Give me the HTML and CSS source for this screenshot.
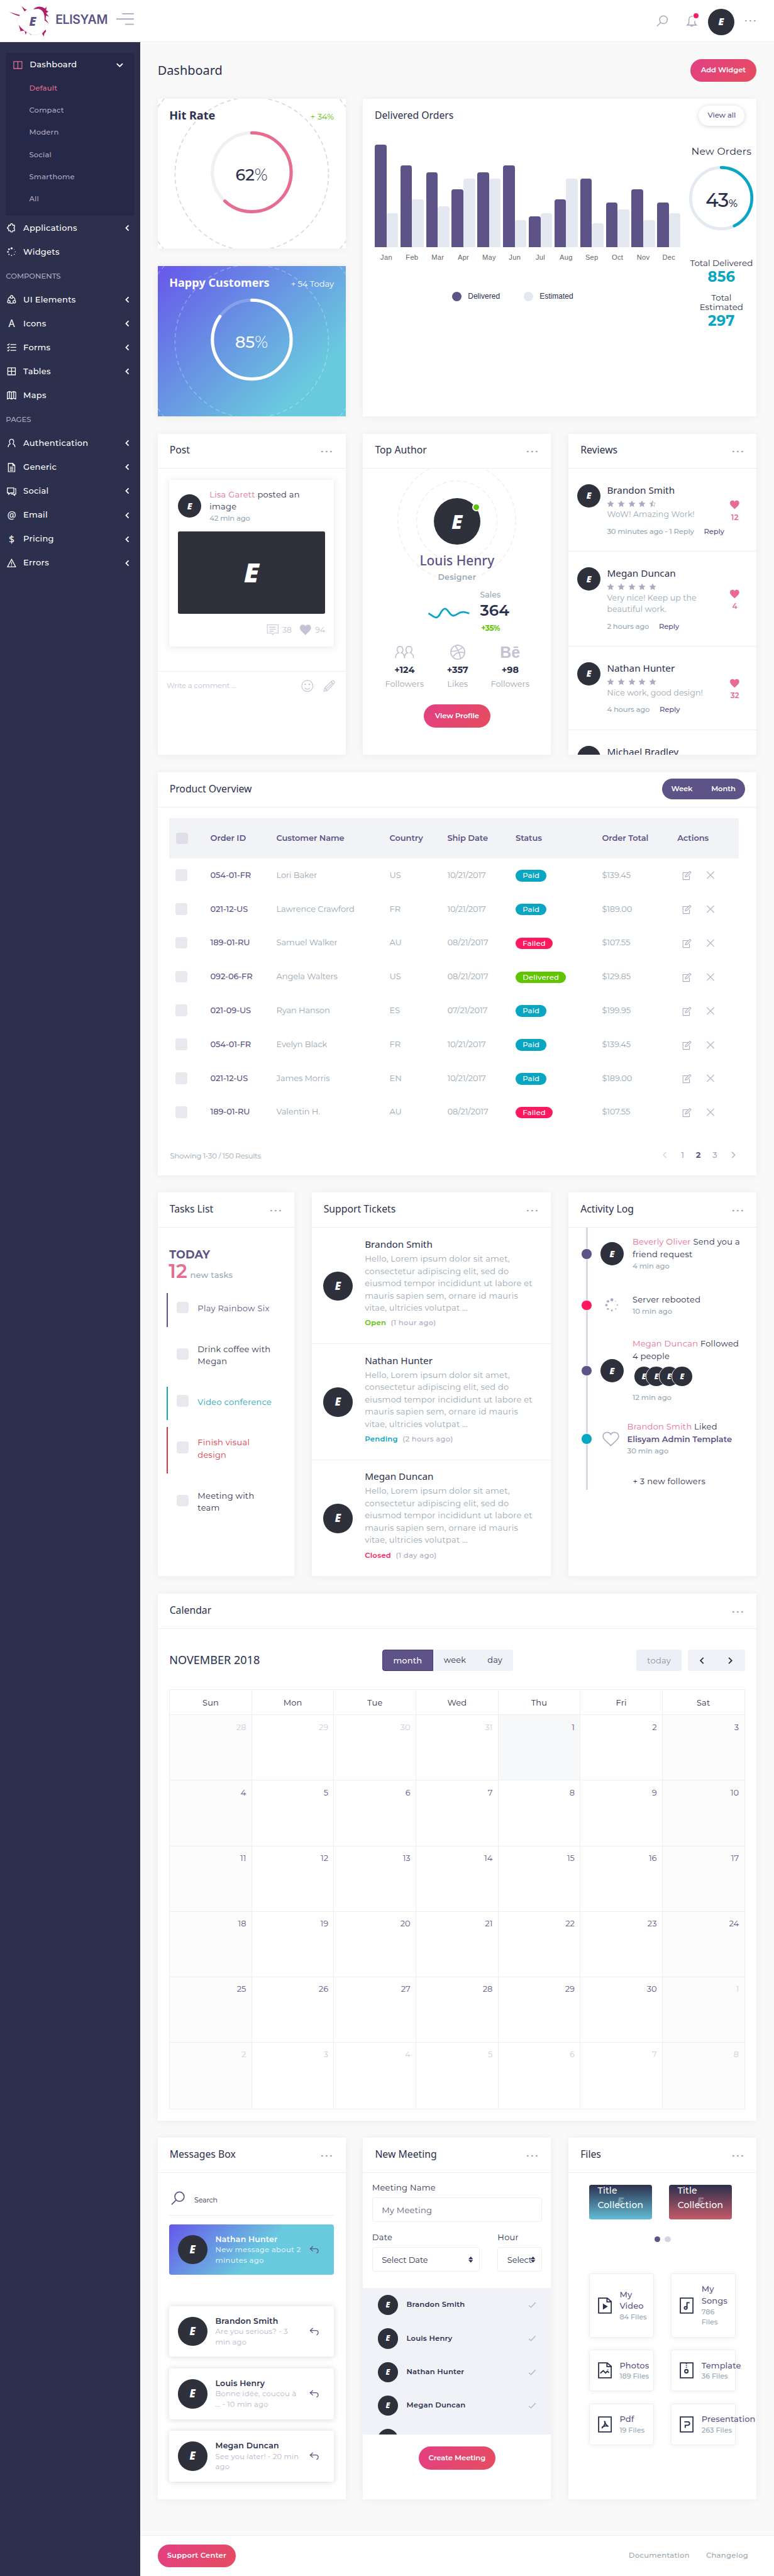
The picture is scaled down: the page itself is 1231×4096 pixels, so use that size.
FILE: index.html
```html
<!DOCTYPE html>
<html lang="en">
<head>
<meta charset="utf-8">
<title>Elisyam - Dashboard</title>
<link rel="stylesheet" href="styles.css">
</head>
<body>
<div class="page">
<svg class="sprite" aria-hidden="true">
  <symbol id="i-columns" viewBox="0 0 16 16"><path d="M1 2h14v12H1zM8 2v12"/></symbol>
  <symbol id="i-puzzle" viewBox="0 0 16 16"><path d="M3 3.500h3Q5.800.8 8 .8t2 2.700h3v3q-1 .2-1 1.300t1 1.600v3.300h-3Q9.800 15.200 8 15.200t-2-2.500H3v-3Q.8 9.600.8 7.800T3 6.300z"/></symbol>
  <symbol id="i-loader" viewBox="0 0 24 24"><g class="fill"><circle cx="12" cy="3" r="2.600"/><circle cx="5.300" cy="5.600" r="2.200"/><circle cx="2.600" cy="12" r="2"/><circle cx="5.300" cy="18.600" r="1.700"/><circle cx="12" cy="21.300" r="1.500"/><circle cx="18.700" cy="18.600" r="1.200"/><circle cx="21.500" cy="12" r="1.100"/><circle cx="18.700" cy="5.600" r=".8"/></g></symbol>
  <symbol id="i-share" viewBox="0 0 16 16"><path d="M5.500 3.500C3 4.500 2 6.500 2.200 9M10.500 3.500c2.500 1 3.500 3 3.300 5.500M5.500 13.800q2.500.8 5 0"/><circle cx="8" cy="3.400" r="2.300"/><circle cx="3.300" cy="11.600" r="2.200"/><circle cx="12.700" cy="11.600" r="2.200"/></symbol>
  <symbol id="i-forms" viewBox="0 0 16 16"><path d="M6 3h10M6 8h10M6 13h10M.8 2.800l1.300 1.300L4.300 1.500M.8 7.800l1.300 1.300 2.200-2.600M.8 12.800l1.300 1.300 2.200-2.600"/></symbol>
  <symbol id="i-grid" viewBox="0 0 16 16"><path d="M1.500 2h13v12h-13zM8 2v12M1.500 8h13"/></symbol>
  <symbol id="i-map" viewBox="0 0 16 16"><path d="M.8 3l3.600-1.500L8 3l3.600-1.500L15.200 3v11.500L11.600 13 8 14.500 4.400 13 .8 14.500zM4.400 1.500V13M8 3v11.500M11.600 1.500V13"/></symbol>
  <symbol id="i-user" viewBox="0 0 16 16"><path d="M2.200 15c0-3.500 2-5 3.800-5.400M13.800 15c0-3.500-2-5-3.800-5.400M2.200 14V15M6 9.600C3 7 4 1.500 8 1.500S13 7 10 9.600"/></symbol>
  <symbol id="i-doc" viewBox="0 0 16 16"><path d="M2.500.8H10l3.500 3.500v11h-11zM10 .8v3.500h3.500M5 7.500h6M5 10h6M5 12.500h6"/></symbol>
  <symbol id="i-chat" viewBox="0 0 16 16"><path d="M.8 2h11v8.500H6L3 13v-2.500H.8zM13.500 3.500h1.800v9h-2V15l-3-2.500H7"/></symbol>
  <symbol id="i-warn" viewBox="0 0 16 16"><path d="M8 1.500l7 13H1zM8 6v4.500M8 11.800v1.500"/></symbol>
  <symbol id="i-chev" viewBox="0 0 16 16"><path d="M10.500 3L5.500 8l5 5"/></symbol>
  <symbol id="i-search" viewBox="0 0 24 24"><circle cx="14.500" cy="9.500" r="8"/><path d="M8.500 15.500L1 23"/></symbol>
  <symbol id="i-bell" viewBox="0 0 24 24"><path d="M14 3C8 1.500 6 6 6 10v7l-3.500 3.500h19L18 17v-5M9.500 21c.5 3 4.500 3 5 0"/></symbol>
  <symbol id="i-dots" viewBox="0 0 20 4"><g class="fill"><rect x="0" y="1" width="3" height="2.500"/><rect x="8" y="1" width="3" height="2.500"/><rect x="16" y="1" width="3" height="2.500"/></g></symbol>
  <symbol id="i-comment" viewBox="0 0 24 24"><path d="M1 2h22v17h-8.500L12 22l-2.500-3H1zM5 7h13M5 11h14M5 15h9"/></symbol>
  <symbol id="i-heart" viewBox="0 0 24 22"><path class="fill" d="M12 21.500C7 16.500 1 12 1 7c0-6.500 8.500-8 11-3 2.500-5 11-3.500 11 3 0 5-6 9.500-11 14.500z"/></symbol>
  <symbol id="i-heart-o" viewBox="0 0 30 26"><path d="M15 25C10 19 1.200 14.500 1.200 8.500c0-8 10.500-9.500 13.800-3.500C18.300-1 28.800.5 28.800 8.500c0 6-8.800 10.500-13.800 16.500z"/></symbol>
  <symbol id="i-smile" viewBox="0 0 24 24"><circle cx="12" cy="12" r="11"/><path d="M7 15.500c2 4 8 4 10 0"/><g class="fill"><circle cx="8" cy="9" r="1.500"/><circle cx="16" cy="9" r="1.500"/></g></symbol>
  <symbol id="i-pencil" viewBox="0 0 24 24"><path d="M1.500 22.500L3 16 17.500 1.800q1.500-1.200 3.500.8t1 3.600L8 21zM16 4l4.500 4.500M3 16l5 5M18.500 6L6 18"/></symbol>
  <symbol id="i-star" viewBox="0 0 16 16"><path class="fill" d="M8 .8l2.200 4.900 5.200.5-3.900 3.500 1.200 5.300L8 12.300 3.300 15l1.200-5.300L.6 6.200l5.200-.5z"/></symbol>
  <symbol id="i-half" viewBox="0 0 16 16"><path class="fill" d="M8 .8v11.500L3.300 15l1.200-5.300L.6 6.200l5.200-.5z"/><path d="M8 2l1.800 4.200 4.200.4-3.200 2.800 1 4.200L8 11.500"/></symbol>
  <symbol id="i-users" viewBox="0 0 32 22"><path d="M1 21c0-5 2-8 5.500-9C2.500 9 3 1.500 8.500 1.500S15 9 11 12c3 .8 5 3.500 5 9M16 21c0-5.500 2-8.200 5-9-4-3-3.500-10.500 2.500-10.500S29.500 9 25.500 12c3.500 1 5.500 4 5.500 9"/></symbol>
  <symbol id="i-dribbble" viewBox="0 0 26 26"><circle cx="13" cy="13" r="12"/><path d="M8.500 2c5 6 8 13 9.500 22M1 11.500c8 .5 15-1 20.500-7.500M4.500 21.500C9 13.500 16 11.500 25 14"/></symbol>
  <symbol id="i-edit" viewBox="0 0 18 18"><path d="M11 3H1.500v13.500h12.500V9M6 11.500l1-3.500L14.500.8l2.500 1.700L10 10z"/></symbol>
  <symbol id="i-x" viewBox="0 0 16 16"><path d="M1 1l14 14M15 1L1 15"/></symbol>
  <symbol id="i-check" viewBox="0 0 16 16"><path d="M1 9l4.500 4L15 3"/></symbol>
  <symbol id="i-reply" viewBox="0 0 18 16"><path d="M6.500 1.500L1.500 6l5 4.500M1.500 6H12c5 0 5.500 6.500 1 8"/></symbol>
  <symbol id="i-sort" viewBox="0 0 8 11"><path class="fill" d="M4 0l4 4.500H0zM0 6h8l-4 4.500z"/></symbol>
  <symbol id="f-fold" viewBox="0 0 24 28"><path d="M1.200 1.200H16l6.800 6V26.800H1.200zM15.500 1.200v6.500h7"/></symbol>
  <symbol id="f-sq" viewBox="0 0 24 28"><path d="M1.200 1.200h21.600v25.600H1.200z"/></symbol>
</svg>

<header class="topbar">
  <svg class="logo" viewBox="0 0 76 56">
    <path class="splat" d="M1 12q10 6 18 8l1-2Q8 15 1 12M23 3l5 9 4-3-3-1zM43 8q10-8 20-1l3-3-1 6 4 2-4 3 5 6-5-2-1 6 6 8-9-7Q63 11 43 8M18 35l3 10-2 1 9-1 2 7 2-5 8 6-2-4Q26 46 21 35zM58 50l6-7 1 3-3 4-1 5z"/>
    <path class="blob" d="M17 24Q30 8 52 8q11 2 10 20 3 17-5 21-12 7-22 0-15-8-20-20-1-3 2-5z"/>
    <text class="logo-e" x="36" y="37">E</text>
  </svg>
  <span class="brand">ELISYAM</span>
  <svg class="burger" viewBox="0 0 30 20"><path d="M10 1h20M0 10h30M15 19h15"/></svg>
  <div class="top-actions">
    <svg class="ic t-search"><use href="#i-search"/></svg>
    <span class="bell"><svg class="ic t-bell"><use href="#i-bell"/></svg><i></i></span>
    <span class="av av40">E</span>
    <svg class="ic dots"><use href="#i-dots"/></svg>
  </div>
</header>

<div class="shell">
<nav class="side">
  <div class="open">
    <div class="open-head"><svg class="ic"><use href="#i-columns"/></svg><span>Dashboard</span><svg class="ic chev down"><use href="#i-chev"/></svg></div>
    <a class="sub on">Default</a><a class="sub">Compact</a><a class="sub">Modern</a><a class="sub">Social</a><a class="sub">Smarthome</a><a class="sub">All</a>
  </div>
  <a class="item"><svg class="ic"><use href="#i-puzzle"/></svg><span>Applications</span><svg class="ic chev"><use href="#i-chev"/></svg></a>
  <a class="item"><svg class="ic"><use href="#i-loader"/></svg><span>Widgets</span></a>
  <div class="group">COMPONENTS</div>
  <a class="item"><svg class="ic"><use href="#i-share"/></svg><span>UI Elements</span><svg class="ic chev"><use href="#i-chev"/></svg></a>
  <a class="item"><b class="glyph">A</b><span>Icons</span><svg class="ic chev"><use href="#i-chev"/></svg></a>
  <a class="item"><svg class="ic"><use href="#i-forms"/></svg><span>Forms</span><svg class="ic chev"><use href="#i-chev"/></svg></a>
  <a class="item"><svg class="ic"><use href="#i-grid"/></svg><span>Tables</span><svg class="ic chev"><use href="#i-chev"/></svg></a>
  <a class="item"><svg class="ic"><use href="#i-map"/></svg><span>Maps</span></a>
  <div class="group">PAGES</div>
  <a class="item"><svg class="ic"><use href="#i-user"/></svg><span>Authentication</span><svg class="ic chev"><use href="#i-chev"/></svg></a>
  <a class="item"><svg class="ic"><use href="#i-doc"/></svg><span>Generic</span><svg class="ic chev"><use href="#i-chev"/></svg></a>
  <a class="item"><svg class="ic"><use href="#i-chat"/></svg><span>Social</span><svg class="ic chev"><use href="#i-chev"/></svg></a>
  <a class="item"><b class="glyph">@</b><span>Email</span><svg class="ic chev"><use href="#i-chev"/></svg></a>
  <a class="item"><b class="glyph">$</b><span>Pricing</span><svg class="ic chev"><use href="#i-chev"/></svg></a>
  <a class="item"><svg class="ic"><use href="#i-warn"/></svg><span>Errors</span><svg class="ic chev"><use href="#i-chev"/></svg></a>
</nav>

<div class="content">
<main class="main">
  <div class="page-head"><h1>Dashboard</h1><a class="btn">Add Widget</a></div>

  <div class="row r1">
    <div class="stack">
      <section class="card rate">
        <svg class="rings" viewBox="0 0 322 257"><g class="dash"><circle cx="161" cy="129" r="131.500"/><circle cx="161" cy="129" r="198"/></g><circle class="trk" cx="161" cy="126" r="67.500"/><circle class="val" cx="161" cy="126" r="67.500" pathLength="100" stroke-dasharray="62 100" transform="rotate(-90 161 126)"/></svg>
        <div class="rate-head"><h2>Hit Rate</h2><span class="green">+ 34%</span></div>
        <div class="pct">62<span>%</span></div>
      </section>
      <section class="card rate happy">
        <svg class="rings" viewBox="0 0 322 257"><g class="dash"><circle cx="161" cy="129" r="131.500"/><circle cx="161" cy="129" r="198"/></g><circle class="trk" cx="161" cy="126" r="67.500"/><circle class="val" cx="161" cy="126" r="67.500" pathLength="100" stroke-dasharray="85 100" transform="rotate(-90 161 126)"/></svg>
        <div class="rate-head"><h2>Happy Customers</h2><span>+ 54 Today</span></div>
        <div class="pct">85<span>%</span></div>
      </section>
    </div>
    <section class="card orders">
      <div class="orders-head"><h3>Delivered Orders</h3><a class="view-all">View all</a></div>
      <div class="orders-body">
        <div class="chart-col">
          <div class="chart">
            <div class="m"><i style="height:175px"></i><i style="height:58px"></i></div>
            <div class="m"><i style="height:140px"></i><i style="height:81px"></i></div>
            <div class="m"><i style="height:128px"></i><i style="height:70px"></i></div>
            <div class="m"><i style="height:99px"></i><i style="height:117px"></i></div>
            <div class="m"><i style="height:128px"></i><i style="height:117px"></i></div>
            <div class="m"><i style="height:140px"></i><i style="height:46px"></i></div>
            <div class="m"><i style="height:52px"></i><i style="height:58px"></i></div>
            <div class="m"><i style="height:81px"></i><i style="height:117px"></i></div>
            <div class="m"><i style="height:117px"></i><i style="height:40px"></i></div>
            <div class="m"><i style="height:76px"></i><i style="height:64px"></i></div>
            <div class="m"><i style="height:99px"></i><i style="height:46px"></i></div>
            <div class="m"><i style="height:76px"></i><i style="height:58px"></i></div>
          </div>
          <div class="months"><span>Jan</span><span>Feb</span><span>Mar</span><span>Apr</span><span>May</span><span>Jun</span><span>Jul</span><span>Aug</span><span>Sep</span><span>Oct</span><span>Nov</span><span>Dec</span></div>
          <div class="legend"><span><i class="d1"></i>Delivered</span><span><i class="d2"></i>Estimated</span></div>
        </div>
        <div class="orders-side">
          <div class="no">New Orders</div>
          <div class="gauge"><svg viewBox="0 0 110 110"><circle class="g1" cx="55" cy="55" r="52.500"/><circle class="g2" cx="55" cy="55" r="52.500" pathLength="100" stroke-dasharray="43 100" transform="rotate(-90 55 55)"/></svg><div class="g-num">43<small>%</small></div></div>
          <div class="tot">Total Delivered</div><div class="big">856</div>
          <div class="tot t2">Total<br>Estimated</div><div class="big">297</div>
        </div>
      </div>
    </section>
  </div>

  <div class="row r2">
    <section class="card">
      <div class="head"><h3>Post</h3><svg class="ic dots"><use href="#i-dots"/></svg></div>
      <div class="post">
        <div class="post-top"><span class="av av40">E</span><div><div class="pt"><em>Lisa Garett</em> posted an<br>image</div><div class="ago">42 min ago</div></div></div>
        <div class="photo"><span class="mark">E</span></div>
        <div class="post-meta"><svg class="ic"><use href="#i-comment"/></svg><span>38</span><svg class="ic"><use href="#i-heart"/></svg><span>94</span></div>
      </div>
      <div class="write"><span>Write a comment ...</span><svg class="ic"><use href="#i-smile"/></svg><svg class="ic"><use href="#i-pencil"/></svg></div>
    </section>
    <section class="card author">
      <div class="head"><h3>Top Author</h3><svg class="ic dots"><use href="#i-dots"/></svg></div>
      <div class="author-body">
        <svg class="orbit" viewBox="0 0 322 200"><circle cx="161" cy="90" r="69"/><circle cx="161" cy="90" r="101"/></svg>
        <span class="av av80">E<i class="online"></i></span>
        <div class="a-name">Louis Henry</div>
        <div class="a-role">Designer</div>
        <div class="sales"><svg viewBox="0 0 71 20"><path d="M1 10c6 3 10 8 14 7 6-1 8-15 14-15s8 12 15 12c5 0 9-6 14-6 5-1 8 1 13 2"/></svg><div><div class="s1">Sales</div><div class="s2">364</div><div class="s3">+35%</div></div></div>
        <div class="stats">
          <div><svg class="ic u"><use href="#i-users"/></svg><b>+124</b><span>Followers</span></div>
          <div><svg class="ic"><use href="#i-dribbble"/></svg><b>+357</b><span>Likes</span></div>
          <div><strong class="be">B&#275;</strong><b>+98</b><span>Followers</span></div>
        </div>
        <a class="btn">View Profile</a>
      </div>
    </section>
    <section class="card reviews">
      <div class="head"><h3>Reviews</h3><svg class="ic dots"><use href="#i-dots"/></svg></div>
      <div class="review"><span class="av av40">E</span><div class="rv"><h4>Brandon Smith</h4><div class="stars"><svg class="ic"><use href="#i-star"/></svg><svg class="ic"><use href="#i-star"/></svg><svg class="ic"><use href="#i-star"/></svg><svg class="ic"><use href="#i-star"/></svg><svg class="ic"><use href="#i-half"/></svg></div><p>WoW! Amazing Work!</p><div class="rm">30 minutes ago - 1 Reply<b>Reply</b></div></div><div class="like"><svg class="ic"><use href="#i-heart"/></svg>12</div></div>
      <div class="review"><span class="av av40">E</span><div class="rv"><h4>Megan Duncan</h4><div class="stars"><svg class="ic"><use href="#i-star"/></svg><svg class="ic"><use href="#i-star"/></svg><svg class="ic"><use href="#i-star"/></svg><svg class="ic"><use href="#i-star"/></svg><svg class="ic"><use href="#i-star"/></svg></div><p>Very nice! Keep up the<br>beautiful work.</p><div class="rm">2 hours ago<b>Reply</b></div></div><div class="like"><svg class="ic"><use href="#i-heart"/></svg>4</div></div>
      <div class="review"><span class="av av40">E</span><div class="rv"><h4>Nathan Hunter</h4><div class="stars"><svg class="ic"><use href="#i-star"/></svg><svg class="ic"><use href="#i-star"/></svg><svg class="ic"><use href="#i-star"/></svg><svg class="ic"><use href="#i-star"/></svg><svg class="ic"><use href="#i-star"/></svg></div><p>Nice work, good design!</p><div class="rm">4 hours ago<b>Reply</b></div></div><div class="like"><svg class="ic"><use href="#i-heart"/></svg>32</div></div>
      <div class="review"><span class="av av40">E</span><div class="rv"><h4>Michael Bradley</h4></div></div>
    </section>
  </div>

  <section class="card product">
    <div class="head"><h3>Product Overview</h3><div class="toggle"><span>Week</span><span>Month</span></div></div>
    <div class="table">
      <div class="tr th"><i class="cb"></i><span>Order ID</span><span>Customer Name</span><span>Country</span><span>Ship Date</span><span>Status</span><span>Order Total</span><span>Actions</span></div>
      <div class="tr"><i class="cb"></i><b>054-01-FR</b><span>Lori Baker</span><span>US</span><span>10/21/2017</span><span><u class="paid">Paid</u></span><span>$139.45</span><span class="act"><svg class="ic"><use href="#i-edit"/></svg><svg class="ic"><use href="#i-x"/></svg></span></div>
      <div class="tr"><i class="cb"></i><b>021-12-US</b><span>Lawrence Crawford</span><span>FR</span><span>10/21/2017</span><span><u class="paid">Paid</u></span><span>$189.00</span><span class="act"><svg class="ic"><use href="#i-edit"/></svg><svg class="ic"><use href="#i-x"/></svg></span></div>
      <div class="tr"><i class="cb"></i><b>189-01-RU</b><span>Samuel Walker</span><span>AU</span><span>08/21/2017</span><span><u class="failed">Failed</u></span><span>$107.55</span><span class="act"><svg class="ic"><use href="#i-edit"/></svg><svg class="ic"><use href="#i-x"/></svg></span></div>
      <div class="tr"><i class="cb"></i><b>092-06-FR</b><span>Angela Walters</span><span>US</span><span>08/21/2017</span><span><u class="deliv">Delivered</u></span><span>$129.85</span><span class="act"><svg class="ic"><use href="#i-edit"/></svg><svg class="ic"><use href="#i-x"/></svg></span></div>
      <div class="tr"><i class="cb"></i><b>021-09-US</b><span>Ryan Hanson</span><span>ES</span><span>07/21/2017</span><span><u class="paid">Paid</u></span><span>$199.95</span><span class="act"><svg class="ic"><use href="#i-edit"/></svg><svg class="ic"><use href="#i-x"/></svg></span></div>
      <div class="tr"><i class="cb"></i><b>054-01-FR</b><span>Evelyn Black</span><span>FR</span><span>10/21/2017</span><span><u class="paid">Paid</u></span><span>$139.45</span><span class="act"><svg class="ic"><use href="#i-edit"/></svg><svg class="ic"><use href="#i-x"/></svg></span></div>
      <div class="tr"><i class="cb"></i><b>021-12-US</b><span>James Morris</span><span>EN</span><span>10/21/2017</span><span><u class="paid">Paid</u></span><span>$189.00</span><span class="act"><svg class="ic"><use href="#i-edit"/></svg><svg class="ic"><use href="#i-x"/></svg></span></div>
      <div class="tr"><i class="cb"></i><b>189-01-RU</b><span>Valentin H.</span><span>AU</span><span>08/21/2017</span><span><u class="failed">Failed</u></span><span>$107.55</span><span class="act"><svg class="ic"><use href="#i-edit"/></svg><svg class="ic"><use href="#i-x"/></svg></span></div>
    </div>
    <div class="tfoot"><span class="showing">Showing 1-30 / 150 Results</span><div class="pager"><svg class="ic off"><use href="#i-chev"/></svg><span>1</span><b>2</b><span>3</span><svg class="ic next"><use href="#i-chev"/></svg></div></div>
  </section>

  <div class="row r4">
    <section class="card tasks">
      <div class="head"><h3>Tasks List</h3><svg class="ic dots"><use href="#i-dots"/></svg></div>
      <div class="today">TODAY</div>
      <div class="count"><b>12</b><span>new tasks</span></div>
      <div class="task purple"><i class="cb"></i><span>Play Rainbow Six</span></div>
      <div class="task two"><i class="cb"></i><span>Drink coffee with<br>Megan</span></div>
      <div class="task teal"><i class="cb"></i><span>Video conference</span></div>
      <div class="task two red"><i class="cb"></i><span>Finish visual<br>design</span></div>
      <div class="task two"><i class="cb"></i><span>Meeting with<br>team</span></div>
    </section>
    <section class="card tickets">
      <div class="head"><h3>Support Tickets</h3><svg class="ic dots"><use href="#i-dots"/></svg></div>
      <div class="ticket"><span class="av av50">E</span><div><h4>Brandon Smith</h4><p>Hello, Lorem ipsum dolor sit amet,<br>consectetur adipiscing elit, sed do<br>eiusmod tempor incididunt ut labore et<br>mauris sapien sem, ornare id mauris<br>vitae, ultricies volutpat ...</p><div class="st"><b class="c-open">Open</b><span>(1 hour ago)</span></div></div></div>
      <div class="ticket"><span class="av av50">E</span><div><h4>Nathan Hunter</h4><p>Hello, Lorem ipsum dolor sit amet,<br>consectetur adipiscing elit, sed do<br>eiusmod tempor incididunt ut labore et<br>mauris sapien sem, ornare id mauris<br>vitae, ultricies volutpat ...</p><div class="st"><b class="c-pend">Pending</b><span>(2 hours ago)</span></div></div></div>
      <div class="ticket"><span class="av av50">E</span><div><h4>Megan Duncan</h4><p>Hello, Lorem ipsum dolor sit amet,<br>consectetur adipiscing elit, sed do<br>eiusmod tempor incididunt ut labore et<br>mauris sapien sem, ornare id mauris<br>vitae, ultricies volutpat ...</p><div class="st"><b class="c-closed">Closed</b><span>(1 day ago)</span></div></div></div>
    </section>
    <section class="card log">
      <div class="head"><h3>Activity Log</h3><svg class="ic dots"><use href="#i-dots"/></svg></div>
      <div class="timeline">
        <div class="ev e1"><i class="dot"></i><span class="av av40">E</span><div><em>Beverly Oliver</em> Send you a<br>friend request<small>4 min ago</small></div></div>
        <div class="ev e2"><i class="dot pink"></i><svg class="ic ld"><use href="#i-loader"/></svg><div>Server rebooted<small>10 min ago</small></div></div>
        <div class="ev e3"><i class="dot"></i><span class="av av40">E</span><div><em>Megan Duncan</em> Followed<br>4 people<span class="crew"><span class="av av32">E</span><span class="av av32">E</span><span class="av av32">E</span><span class="av av32">E</span></span><small>12 min ago</small></div></div>
        <div class="ev e4"><i class="dot cyan"></i><svg class="ic ht"><use href="#i-heart-o"/></svg><div><em>Brandon Smith</em> Liked<br><b>Elisyam Admin Template</b><small>30 min ago</small></div></div>
        <div class="ev e5"><div>+ 3 new followers</div></div>
      </div>
    </section>
  </div>

  <section class="card cal">
    <div class="head"><h3>Calendar</h3><svg class="ic dots"><use href="#i-dots"/></svg></div>
    <div class="cal-bar"><h2>NOVEMBER 2018</h2><div class="seg"><span class="on">month</span><span>week</span><span>day</span></div><div class="nav"><span class="today-b">today</span><span class="arrows"><svg class="ic"><use href="#i-chev"/></svg><svg class="ic next"><use href="#i-chev"/></svg></span></div></div>
    <div class="days">
      <span class="dh">Sun</span><span class="dh">Mon</span><span class="dh">Tue</span><span class="dh">Wed</span><span class="dh">Thu</span><span class="dh">Fri</span><span class="dh">Sat</span>
      <span class="o w">28</span><span class="o">29</span><span class="o">30</span><span class="o">31</span><span class="now">1</span><span>2</span><span class="w">3</span>
      <span class="w">4</span><span>5</span><span>6</span><span>7</span><span>8</span><span>9</span><span class="w">10</span>
      <span class="w">11</span><span>12</span><span>13</span><span>14</span><span>15</span><span>16</span><span class="w">17</span>
      <span class="w">18</span><span>19</span><span>20</span><span>21</span><span>22</span><span>23</span><span class="w">24</span>
      <span class="w">25</span><span>26</span><span>27</span><span>28</span><span>29</span><span>30</span><span class="o w">1</span>
      <span class="o w">2</span><span class="o">3</span><span class="o">4</span><span class="o">5</span><span class="o">6</span><span class="o">7</span><span class="o w">8</span>
    </div>
  </section>

  <div class="row r6">
    <section class="card msgs">
      <div class="head"><h3>Messages Box</h3><svg class="ic dots"><use href="#i-dots"/></svg></div>
      <div class="find"><svg class="ic"><use href="#i-search"/></svg><span>Search</span></div>
      <div class="msg hot"><span class="av av50">E</span><div><b>Nathan Hunter</b><p>New message about 2<br>minutes ago</p></div><svg class="ic"><use href="#i-reply"/></svg></div>
      <div class="msg"><span class="av av50">E</span><div><b>Brandon Smith</b><p>Are you serious? - 3<br>min ago</p></div><svg class="ic"><use href="#i-reply"/></svg></div>
      <div class="msg"><span class="av av50">E</span><div><b>Louis Henry</b><p>Bonne idée, coucou à<br>... - 10 min ago</p></div><svg class="ic"><use href="#i-reply"/></svg></div>
      <div class="msg"><span class="av av50">E</span><div><b>Megan Duncan</b><p>See you later! - 20 min<br>ago</p></div><svg class="ic"><use href="#i-reply"/></svg></div>
    </section>
    <section class="card meet">
      <div class="head"><h3>New Meeting</h3><svg class="ic dots"><use href="#i-dots"/></svg></div>
      <div class="form">
        <div class="lab">Meeting Name</div><div class="inp">My Meeting</div>
        <div class="two-f"><div><div class="lab">Date</div><div class="inp sel">Select Date<svg class="ic"><use href="#i-sort"/></svg></div></div><div><div class="lab">Hour</div><div class="inp sel">Select<svg class="ic"><use href="#i-sort"/></svg></div></div></div>
      </div>
      <div class="people">
        <div><span class="av av35">E</span><b>Brandon Smith</b><svg class="ic"><use href="#i-check"/></svg></div>
        <div><span class="av av35">E</span><b>Louis Henry</b><svg class="ic"><use href="#i-check"/></svg></div>
        <div><span class="av av35">E</span><b>Nathan Hunter</b><svg class="ic"><use href="#i-check"/></svg></div>
        <div><span class="av av35">E</span><b>Megan Duncan</b><svg class="ic"><use href="#i-check"/></svg></div>
        <div><span class="av av35"></span></div>
      </div>
      <a class="btn">Create Meeting</a>
    </section>
    <section class="card files">
      <div class="head"><h3>Files</h3><svg class="ic dots"><use href="#i-dots"/></svg></div>
      <div class="tiles"><div class="tile t-blue"><s aria-hidden="true">E</s><div>Title<br>Collection</div></div><div class="tile t-red"><s aria-hidden="true">E</s><div>Title<br>Collection</div></div></div>
      <div class="pips"><i></i><i></i></div>
      <div class="fgrid">
        <div class="f tall"><svg class="ic" viewBox="0 0 24 28"><use href="#f-fold"/><path class="fill" d="M8.500 10.500l8.500 5-8.500 5.500z"/></svg><div>My<br>Video<small>84 Files</small></div></div>
        <div class="f tall"><svg class="ic" viewBox="0 0 24 28"><use href="#f-sq"/><path d="M12.500 8v10M12.500 9h4.500"/><circle cx="10.300" cy="18" r="2.300"/></svg><div>My<br>Songs<small>786<br>Files</small></div></div>
        <div class="f"><svg class="ic" viewBox="0 0 24 28"><use href="#f-fold"/><path d="M4 19l5-4.500 4 4 3-3 3 2.500M17 12.500v1"/></svg><div>Photos<small>189 Files</small></div></div>
        <div class="f"><svg class="ic" viewBox="0 0 24 28"><use href="#f-sq"/><path d="M11.500 2v9" stroke-dasharray="1.500 1.500"/><circle cx="11.500" cy="15.500" r="2.800"/></svg><div>Template<small>36 Files</small></div></div>
        <div class="f"><svg class="ic" viewBox="0 0 24 28"><use href="#f-sq"/><path d="M11 8c1 4 2 7 7 9.500M12.500 9q-.5 7-6 11.500M7 18.500q5-3 10.500-1.500"/></svg><div>Pdf<small>19 Files</small></div></div>
        <div class="f"><svg class="ic" viewBox="0 0 24 28"><use href="#f-sq"/><path d="M8 9.500h6q3 .3 3 3t-3 3H9.500V20"/></svg><div>Presentation<small>263 Files</small></div></div>
      </div>
    </section>
  </div>
</main>
<footer class="foot"><a class="btn">Support Center</a><span>Documentation</span><span>Changelog</span></footer>
</div>
</div>
</div>
</body>
</html>
```

FILE: styles.css
```css
* { box-sizing: border-box; }
html { background: #f9f9f9; }
body { margin: 0; }
.page {
  zoom: 0.9283;
  width: 1326px;
  height: 4412px;
  overflow: hidden;
  font: 500 14px/21px Montserrat, Inter, "Liberation Sans", sans-serif;
  letter-spacing: 0.3px;
  color: #2c304d;
  background: #f9f9f9;
}
h1, h2, h3, h4, p { margin: 0; font-weight: 400; }
h1, h2, h3, h4, .a-name { font-family: "Noto Sans", "Open Sans", sans-serif; letter-spacing: 0; white-space: nowrap; }
em { font-style: normal; color: #e76c90; }
.sprite { display: block; width: 0; height: 0; position: absolute; }
.ic { fill: none; stroke: currentColor; stroke-width: 1.4; width: 16px; height: 16px; flex: none; overflow: visible; }
.fill { fill: currentColor; stroke: none; }
.dots { width: 19px; height: 4px; color: #98a8b4; }

.av { display: flex; align-items: center; justify-content: center; flex: none; border-radius: 50%; background: #2e303c; color: #fff; font: italic 800 15px/1 "Open Sans", sans-serif; letter-spacing: 0; }
.av40 { width: 40px; height: 40px; }
.av50 { width: 50px; height: 50px; font-size: 18px; }
.av80 { width: 80px; height: 80px; font-size: 33px; }
.av35 { width: 35px; height: 35px; font-size: 13px; }
.av32 { width: 33px; height: 33px; font-size: 13px; }
.btn { display: inline-flex; align-items: center; justify-content: center; width: 113.500px; height: 39px; border-radius: 20px; background: linear-gradient(135deg, #e23f83, #e64d5f); color: #fff; font-size: 12.500px; font-weight: 600; letter-spacing: -0.1px; white-space: nowrap; }

/* top bar */
.topbar { height: 72px; background: #fff; border-bottom: 1px solid #eee; display: flex; align-items: center; }
.logo { width: 76px; height: 56px; margin-left: 14px; }
.splat { fill: #b01e68; }
.blob { fill: #fff; stroke: #eee; stroke-width: 1; }
.logo-e { font: italic 800 21px "Open Sans", sans-serif; fill: #5d5386; }
.brand { width: 112px; padding-left: 5px; font: 600 21px/30px Inter, sans-serif; letter-spacing: -0.4px; color: #5d5386; margin-top: -3px; }
.burger { width: 30px; height: 20px; flex: none; fill: none; stroke: #aea9c3; stroke-width: 2; margin-top: -5px; margin-left: -3px; }
.top-actions { margin-left: auto; margin-right: 30px; display: flex; align-items: center; color: #aea9c3; }
.top-actions .av { width: 45px; height: 45px; margin: 5px 19px 0 18px; font-size: 17px; }
.t-search { width: 20px; height: 20px; stroke-width: 2; }
.bell { display: flex; position: relative; margin-left: 30px; }
.t-bell { width: 20px; height: 20px; stroke-width: 2; }
.bell i { position: absolute; left: 13px; top: -3px; width: 9px; height: 9px; border-radius: 50%; background: #fe195e; }
.top-actions .dots { color: #aea9c3; }

.shell { display: flex; height: 4340px; }
.side { width: 240px; flex: none; background: #2c304d; padding: 18px 10px; color: #fff; }
.open { height: 279px; background: #252846; border-radius: 4px; padding: 0 13px; }
.open-head { display: flex; align-items: center; height: 42px; }
.open-head .ic:first-child { color: #e76c90; margin-right: 12px; }
.open-head .chev { margin-left: auto; margin-right: 4px; stroke-width: 2; }
.down { transform: rotate(-90deg); }
.sub { display: block; height: 38.100px; line-height: 38px; padding-left: 27px; font-size: 12.500px; color: #aea9c3; letter-spacing: 0.2px; }
.sub.on { color: #e76c90; }
.item { display: flex; align-items: center; height: 41px; padding-left: 2px; }
.item > :first-child { margin-right: 12px; }
.item .chev { margin-left: auto; margin-right: 5px; width: 14px; height: 14px; stroke-width: 2.200; }
.item:nth-child(2) { margin-top: 1px; }
.glyph { width: 16px; text-align: center; font: 400 17px/16px "Noto Sans", sans-serif; letter-spacing: 0; }
.group { height: 41px; line-height: 42px; font-size: 12.500px; color: #aea9c3; letter-spacing: 0; }

.content { flex: 1; display: flex; flex-direction: column; min-width: 0; }
.main { padding: 0 30px; flex: 1; }
.page-head { display: flex; align-items: center; justify-content: space-between; height: 97px; }
.page-head h1 { font-size: 21.500px; }
.card { background: #fff; box-shadow: 0 1px 12px rgba(52, 40, 104, .07); overflow: hidden; }
.row { display: grid; gap: 30px; grid-template-columns: 322px 322px 322px; margin-bottom: 30px; }
.head { display: flex; align-items: center; justify-content: space-between; height: 60px; padding: 0 22px 2px 20.500px; border-bottom: 1px solid #eee; }
h3 { font-size: 17px; }
.head .dots { margin-top: 4px; }

/* first row */
.r1 { grid-template-columns: 322px 674px; }
.stack { display: grid; gap: 30px; }
.rate { height: 257px; position: relative; }
.rings { position: absolute; inset: 0; width: 322px; height: 257px; fill: none; }
.dash { stroke: #d9d9e0; stroke-width: 1.800; stroke-dasharray: 7 5; }
.trk { stroke: #efeff4; stroke-width: 5.500; }
.val { stroke: #e76c90; stroke-width: 5.500; stroke-linecap: round; }
.rate-head { position: relative; display: flex; justify-content: space-between; align-items: center; height: 58px; padding: 0 20px; }
.rate-head h2 { font-weight: 700; font-size: 19.500px; }
.rate-head span { margin-top: 4px; letter-spacing: 0; font-weight: 450; }
.green { color: #60c400; }
.pct { position: relative; text-align: center; font-size: 27.500px; line-height: 40px; margin-top: 52px; letter-spacing: 0; }
.pct span { font-weight: 300; }
.happy { background: linear-gradient(135deg, #6757ea 0%, #69c9de 78%); color: #fff; }
.happy .dash { stroke: rgba(255,255,255,.25); }
.happy .trk { stroke: rgba(255,255,255,.2); }
.happy .val { stroke: #fff; }

.orders { height: 544px; }
.orders-head { display: flex; justify-content: space-between; align-items: center; height: 58px; padding: 0 20px; }
.view-all { width: 79px; height: 35px; border-radius: 18px; box-shadow: 0 1px 8px rgba(52, 40, 104, .2); text-align: center; line-height: 34px; font-size: 12.500px; letter-spacing: -0.1px; color: #5d5386; }
.orders-body { display: flex; }
.chart-col { width: 524px; margin-left: 20px; padding-top: 21px; }
.chart { display: flex; justify-content: space-between; align-items: flex-end; height: 175px; }
.m { display: flex; align-items: flex-end; width: 40px; }
.m i { width: 20px; background: #5d5386; border-radius: 4px 4px 0 0; }
.m i + i { background: #e4e8f0; }
.months { display: flex; justify-content: space-between; font: 12px/14px "Liberation Sans", Arial, sans-serif; color: #666; margin-top: 11px; }
.months span { width: 40px; text-align: center; }
.legend { display: flex; justify-content: center; gap: 41px; margin: 52px 51px 0 0; font: 13px/16px "Liberation Sans", Arial, sans-serif; letter-spacing: 0; }
.legend span { display: flex; align-items: center; gap: 11px; }
.legend i { width: 16px; height: 16px; border-radius: 50%; background: #5d5386; }
.legend .d2 { background: #e4e8f0; }
.orders-side { width: 110px; margin-left: 15px; text-align: center; padding-top: 21px; white-space: nowrap; }
.no { font-size: 17px; line-height: 24px; font-weight: 450; letter-spacing: 0.2px; }
.gauge { position: relative; height: 110px; margin-top: 12px; }
.gauge svg { width: 110px; height: 110px; fill: none; stroke-width: 5; overflow: visible; }
.g1 { stroke: #e4e8f0; }
.g2 { stroke: #08a6c3; stroke-linecap: round; }
.g-num { position: absolute; inset: 4px 0 0; line-height: 110px; font-size: 33px; letter-spacing: -0.5px; }
.g-num small { font-size: 18px; }
.tot { font-size: 14.500px; line-height: 16px; margin: 49px -5px 0; font-weight: 450; letter-spacing: 0; }
.big { font-size: 24.500px; font-weight: 700; line-height: 31px; color: #08a6c3; letter-spacing: 0.3px; }
.t2 { margin-top: 12px; }

/* second row */
.r2 .card { height: 550px; }
.post { margin: 19px 20px 0; height: 286px; padding: 14px 15px 0; box-shadow: 0 1px 12px rgba(52, 40, 104, .12); }
.post-top { display: flex; gap: 14px; padding-bottom: 11px; }
.post-top .av { margin-top: 11px; }
.pt { line-height: 21px; font-size: 14px; font-weight: 450; padding-top: 1px; }
.ago { font-size: 12.500px; line-height: 19px; color: #98a8b4; letter-spacing: -0.2px; }
.photo { height: 142px; background: #2e303c; border-radius: 3px; display: flex; align-items: center; justify-content: center; margin-top: 1px; }
.mark { font: italic 800 46px/1 "Open Sans", sans-serif; color: #fff; letter-spacing: 0; }
.post-meta { display: flex; justify-content: flex-end; align-items: center; height: 54px; color: #c4c2d3; }
.post-meta .ic { width: 21px; height: 20px; margin-right: 6px; }
.post-meta span + .ic { margin-left: 13px; }
.post-meta span { letter-spacing: 0; font-weight: 450; font-size: 13.500px; }
.write { display: flex; align-items: center; margin-top: 41px; border-top: 1px solid #eee; padding: 15px 17px 0 15.500px; color: #c4c2d3; }
.write span { flex: 1; font-size: 12.500px; font-weight: 450; letter-spacing: -0.15px; }
.write .ic { width: 21px; height: 21px; margin-left: 17px; }

.author-body { position: relative; display: flex; flex-direction: column; align-items: center; padding-top: 50px; }
.orbit { position: absolute; top: 0; left: 0; width: 322px; height: 200px; fill: none; stroke: #eeeef1; stroke-width: 1.500; stroke-dasharray: 7 5; }
.author-body .av { position: relative; }
.online { position: absolute; right: 0; top: 9px; width: 14px; height: 14px; border: 3px solid #fff; border-radius: 50%; background: #60c400; }
.a-name { position: relative; font-size: 22.500px; font-weight: 500; line-height: 30px; color: #5d5386; margin-top: 13px; }
.a-role { position: relative; background: #fff; padding: 0 4px; font-size: 13.500px; font-weight: 600; color: #98a8b4; line-height: 20px; margin-top: 3px; }
.sales { display: flex; align-items: center; gap: 18px; margin: 11px 0 0 61px; width: 162px; }
.sales svg { width: 72px; height: 20px; fill: none; stroke: #08a6c3; stroke-width: 3; margin-top: 2px; }
.s1 { color: #98a8b4; line-height: 20px; letter-spacing: 0; font-size: 13.500px; }
.s2 { font-size: 26.500px; font-weight: 600; line-height: 32px; letter-spacing: 0; }
.s3 { font-size: 13px; font-weight: 700; color: #60c400; line-height: 28px; letter-spacing: -0.5px; padding-left: 2px; }
.stats { display: grid; grid-template-columns: 92px 90px 90px; width: 272px; justify-content: center; text-align: center; margin-top: 14px; white-space: nowrap; color: #98a8b4; }
.stats > div { display: flex; flex-direction: column; align-items: center; }
.stats .ic { width: 26px; height: 26px; color: #c4c2d3; stroke-width: 1.800; }
.stats .u { width: 33px; }
.be { font: 700 27px/26px "Liberation Sans", sans-serif; color: #c4c2d3; letter-spacing: 0; }
.stats b { font-size: 15.500px; line-height: 24px; color: #2c304d; margin-top: 6px; letter-spacing: 0; font-weight: 700; }
.stats span { line-height: 22px; letter-spacing: 0; font-weight: 450; }
.author-body .btn { margin-top: 25px; }

.review { display: flex; height: 144px; padding: 27px 24px 0 15px; border-bottom: 1px solid #eee; }
.review:nth-child(3) { height: 162px; }
.review:nth-child(2) { height: 142px; padding-top: 26px; }
.rv { margin-left: 11px; width: 204px; white-space: nowrap; flex: none; }
h4 { font-size: 16.500px; line-height: 20px; }
.stars { display: flex; gap: 5px; margin: 7px 0 3px; color: #aea9c3; }
.stars .ic { width: 13px; height: 13px; stroke-width: 1; }
.rv p { font-size: 13.500px; line-height: 19px; color: #98a8b4; letter-spacing: 0.1px; }
.rm { font-size: 12.500px; line-height: 20px; margin-top: 10px; color: #98a8b4; letter-spacing: -0.2px; }
.rm b { color: #5d5386; font-weight: 500; margin-left: 17px; }
.like { margin: 28px 0 0 4px; width: 22px; text-align: center; color: #e76c90; font-size: 13px; font-weight: 600; letter-spacing: 0; line-height: 28px; }
.review:nth-child(3) .like { margin-top: 37px; }
.like .ic { display: block; width: 18px; height: 16px; margin: 0 2px 0; }

/* product table */
.product { height: 690px; margin-bottom: 30px; }
.toggle { display: flex; justify-content: space-between; width: 142px; height: 35px; border-radius: 18px; background: #5d5386; color: #fff; font-weight: 600; font-size: 12.500px; line-height: 35px; padding: 0 16px; letter-spacing: -0.2px; margin-right: -2px; }
.table { margin: 19px 30px 0 20px; }
.tr { display: grid; grid-template-columns: 59.500px 113px 194px 99px 117px 148px 129px 1fr; height: 58px; padding-left: 11px; align-items: center; color: #98a8b4; letter-spacing: -0.1px; font-weight: 450; }
.tr b { font-weight: 500; color: #5d5386; letter-spacing: -0.2px; }
.th { height: 68px; background: #f2f3f6; color: #5d5386; font-weight: 600; padding-left: 12px; grid-template-columns: 58.500px 113px 194px 99px 117px 148px 129px 1fr; }
.cb { width: 20px; height: 20px; border-radius: 4px; background: #e9e8ef; flex: none; }
.th .cb { background: #e0dfe9; }
.tr u { display: inline-block; text-decoration: none; color: #fff; height: 20px; line-height: 20px; padding: 0 12px; border-radius: 10px; font-size: 12.500px; font-weight: 500; background: #08a6c3; letter-spacing: 0.2px; margin-top: 2px; }
.tr .failed { background: #fe195e; }
.tr .deliv { background: #60c400; }
.act { display: flex; gap: 25px; padding: 3px 0 0 8px; color: #aea9c3; }
.act .ic { stroke-width: 1.300; }
.act .ic + .ic { width: 15px; height: 14px; }
.tfoot { display: flex; justify-content: space-between; margin: 35px 31px 0 21.500px; color: #98a8b4; }
.showing { font-size: 12.500px; font-weight: 450; letter-spacing: -0.25px; padding-top: 1px; }
.pager { display: flex; align-items: center; justify-content: space-between; width: 134px; height: 20px; color: #aea9c3; }
.pager b { color: #5d5386; }
.pager .off { opacity: .5; }
.next { transform: rotate(180deg); }

/* lists row */
.r4 { grid-template-columns: 234px 410px 322px; }
.r4 .card { height: 657px; }
.today { font-weight: 700; font-size: 19px; line-height: 24px; color: #5d5386; padding: 34px 0 0 20px; letter-spacing: 0.1px; }
.count { height: 34px; padding-left: 19px; line-height: 34px; display: flex; align-items: baseline; gap: 5px; margin-bottom: 20px; }
.count b { font-size: 33px; font-weight: 650; color: #e76c90; letter-spacing: 0; }
.count span { color: #98a8b4; }
.task { display: flex; align-items: center; height: 58px; margin: 0 0 11px 15px; padding-left: 16px; border-left: 3px solid transparent; white-space: nowrap; font-weight: 450; }
.task span { margin-left: 15.500px; margin-top: -4px; }
.task .cb { margin-top: -9px; }
.two { height: 80px; }
.purple { border-color: #5d5386; color: #5d5386; }
.teal { border-color: #17a2b8; color: #17a2b8; }
.red { border-color: #dc3545; color: #dc3545; }
.ticket { display: flex; align-items: flex-start; gap: 21px; height: 199px; padding: 18px 0 0 20px; border-bottom: 1px solid #eee; white-space: nowrap; }
.ticket:last-child { border: 0; }
.ticket .av { margin-top: 57px; }
.ticket p { color: #98a8b4; margin-top: 4px; letter-spacing: 0.25px; }
.ticket h4 { line-height: 21px; }
.st { font-size: 12.500px; line-height: 20px; margin-top: 5px; color: #aea9c3; }
.st b { margin-right: 8px; font-weight: 600; }
.c-open { color: #60c400; } .c-pend { color: #08a6c3; } .c-closed { color: #fe195e; }
.timeline { height: 449px; margin-left: 30px; border-left: 4px solid #dcd9e7; padding-top: 14px; }
.ev { display: flex; align-items: center; white-space: nowrap; font-weight: 450; }
.ev small { display: block; font-size: 12.500px; line-height: 20px; color: #98a8b4; letter-spacing: -0.1px; font-weight: 500; }
.dot { flex: none; width: 19px; height: 19px; border: 2px solid #fff; border-radius: 50%; background: #5d5386; margin-left: -11.500px; }
.dot.pink { background: #fe195e; } .dot.cyan { background: #08a6c3; }
.ev > .av { margin: 0 15px 0 14px; }
.ld { width: 24px; height: 24px; margin: 0 23px 0 22px; color: #aea9c3; }
.ht { width: 29px; height: 26px; margin: 0 18px 0 17px; color: #aea9c3; stroke-width: 1.800; }
.e1 { height: 62px; } .e2 { height: 42px; margin-top: 36px; } .e3 { height: 114px; margin-top: 34px; } .e4 { height: 62px; margin-top: 29px; } .e5 { margin-top: 31px; padding-left: 77px; }
.e4 > div { margin-left: -4px; }
.e4 b { color: #5d5386; font-weight: 600; letter-spacing: 0; }
.crew { display: flex; padding: 8px 0 10px 3px; }
.crew .av + .av { margin-left: -13px; border: 2px solid #fff; border-width: 0 0 0 2px; width: 35px; }

/* calendar */
.cal { height: 902px; margin-bottom: 30px; }
.cal-bar { display: flex; align-items: center; height: 104px; padding: 4px 20px 0; }
.cal-bar h2 { font-size: 19.500px; width: 365px; }
.seg { display: flex; height: 37px; line-height: 36px; background: #f1f2f8; border-radius: 4px; overflow: hidden; text-align: center; }
.seg span { width: 68px; letter-spacing: 0.2px; font-weight: 450; }
.seg span:nth-child(2) { width: 75px; }
.seg span:nth-child(3) { width: 62px; }
.seg .on { width: 87px; background: #5d5386; color: #fff; border: 1px solid #443a70; border-radius: 4px 0 0 4px; font-weight: 500; }
.nav { display: flex; margin-left: auto; gap: 10px; height: 37px; line-height: 37px; }
.today-b { width: 78px; text-align: center; border-radius: 4px; background: #eceff5; color: #8f90a5; font-weight: 450; }
.arrows { width: 98px; border-radius: 4px; background: #f1f2f8; display: flex; align-items: center; justify-content: space-around; }
.arrows .ic { stroke-width: 2; }
.days { margin: 0 20px; display: grid; grid-template-columns: repeat(7, 1fr); grid-template-rows: 43px repeat(5, 112.200px) 114px; border: solid #eee; border-width: 1px 0 0 1px; }
.days span { border: solid #eee; border-width: 0 1px 1px 0; padding: 10px 9px 0 0; text-align: right; color: #5d5386; letter-spacing: 0; font-weight: 450; }
.days .dh { text-align: center; padding: 11px 0 0; color: #2c304d; letter-spacing: 0.2px; }
.days .w { background: #fcfcfc; }
.days .now { background: #f7f8fa; }
.days .o { color: #cfccdb; }

/* last row */
.r6 .card { height: 619px; }
.find { display: flex; align-items: center; height: 73px; margin: 0 20px 15px; border-bottom: 1px solid #eee; padding: 18px 0 0 3px; color: #5d5386; }
.find .ic { width: 24px; height: 24px; margin-right: 16px; margin-top: -4px; stroke-width: 1.800; }
.find span { font-size: 12px; color: #2c304d; letter-spacing: -0.2px; font-weight: 400; margin-top: 4px; }
.msg { display: flex; align-items: center; height: 87px; margin: 0 20px 20px; padding: 0 25px 0 15px; border-radius: 4px; box-shadow: 0 1px 10px rgba(52, 40, 104, .18); white-space: nowrap; }
.msg > div { margin-left: 14px; }
.msg > .ic { margin-left: auto; width: 17px; color: #5d5386; }
.msg b { display: block; font-size: 13.500px; line-height: 19px; font-weight: 600; letter-spacing: 0.2px; }
.msg p { font-size: 12.500px; line-height: 18px; color: #b9b5ca; letter-spacing: 0.2px; }
.hot { margin-bottom: 53px; box-shadow: none; background: linear-gradient(135deg, #6757ea, #69c9de 55%); color: #fff; }
.hot p { color: #d9f0f8; font-weight: 500; letter-spacing: 0.3px; }
.meet { text-align: center; }
.form { text-align: left; padding: 13px 15.500px 28px; white-space: nowrap; font-weight: 450; }
.lab { line-height: 25px; padding-bottom: 4px; height: 29px; }
.inp { height: 42px; border: 1px solid #eee; border-radius: 4px; line-height: 42px; padding-left: 15.500px; color: #5b5e78; }
.two-f { display: flex; justify-content: space-between; padding-top: 14px; }
.two-f > div { width: 184.500px; }
.two-f > div + div { width: 76px; }
.sel { position: relative; color: #2c304d; letter-spacing: -0.1px; }
.sel .ic { position: absolute; right: 10px; top: 15px; width: 8px; height: 11px; }
.people { height: 251px; background: #f1f2f8; overflow: hidden; padding: 12px 24px 0 25px; margin-bottom: 21px; }
.people > div { display: flex; align-items: center; height: 35px; margin-bottom: 22.400px; }
.people b { font-size: 12.500px; font-weight: 600; margin-left: 14.500px; letter-spacing: 0.2px; }
.people .ic { margin-left: auto; width: 16px; height: 13px; color: #b9b5ca; stroke-width: 2; }
.meet .btn { width: 132px; }
.tiles { display: flex; gap: 29px; margin: 20px 40px 0 35px; }
.tile { display: flow-root; position: relative; width: 108px; height: 60px; border-radius: 4px; padding-left: 15px; line-height: 24.500px; font-size: 15px; letter-spacing: 0.2px; color: #fff; }
.tile div { position: relative; margin-top: -2px; }
.tile s { position: absolute; left: 48px; top: 16px; text-decoration: none; font: italic 800 20px/28px "Open Sans", sans-serif; opacity: .3; }
.t-blue { background: linear-gradient(#2c304d, #63bdd6); }
.t-red { background: linear-gradient(#2c304d, #c55a69); }
.pips { display: flex; gap: 8px; justify-content: center; margin: 29px 0 53px; }
.pips i { width: 10px; height: 10px; border-radius: 50%; background: #5d5386; }
.pips i + i { background: #d8d5e3; }
.fgrid { display: grid; grid-template-columns: 110.500px 110.500px; column-gap: 30px; row-gap: 21px; margin-left: 35.500px; white-space: nowrap; }
.f { display: flex; align-items: center; height: 71px; border: 1px solid #eee; border-radius: 4px; padding-left: 14px; box-shadow: 0 1px 8px rgba(52, 40, 104, .08); color: #5d5386; line-height: 20px; letter-spacing: 0.1px; }
.tall { height: 110px; }
.f .ic { width: 24px; height: 28px; margin-right: 13px; color: #2c304d; stroke-width: 2; }
.f small { display: block; font-size: 12px; line-height: 18px; color: #98a8b4; letter-spacing: 0; }

.foot { height: 70px; background: #fff; border-top: 1px solid #eee; display: flex; align-items: center; padding: 0 44px 0 30px; color: #98a8b4; font-size: 12.500px; }
.foot .btn { width: 134px; margin-right: auto; letter-spacing: 0.2px; }
.foot span + span { margin-left: 28px; }
```
